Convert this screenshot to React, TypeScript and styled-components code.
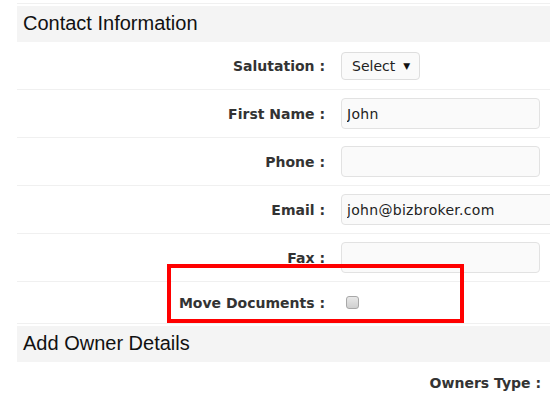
import React from "react";
import styled, { createGlobalStyle } from "styled-components";

const GlobalStyle = createGlobalStyle`
  html, body {
    margin: 0;
    padding: 0;
    background: #fff;
    overflow: hidden;
  }
`;

function App() {
  return (
    <>
      <GlobalStyle />
      <Page>
        <TopRule />
        <SectionTitle>Contact Information</SectionTitle>

        <FormRow>
          <Label>Salutation :</Label>
          <Field>
            <SelectBox>
              Select <Caret>▼</Caret>
            </SelectBox>
          </Field>
        </FormRow>

        <FormRow>
          <Label>First Name :</Label>
          <Field>
            <TextBox value="John" readOnly />
          </Field>
        </FormRow>

        <FormRow>
          <Label>Phone :</Label>
          <Field>
            <TextBox value="" readOnly />
          </Field>
        </FormRow>

        <FormRow>
          <Label>Email :</Label>
          <Field>
            <TextBox value="john@bizbroker.com" readOnly $wide />
          </Field>
        </FormRow>

        <FormRow>
          <Label>Fax :</Label>
          <Field>
            <TextBox value="" readOnly />
          </Field>
        </FormRow>

        <FormRow $short>
          <Label>Move Documents :</Label>
          <Field>
            <Check type="checkbox" />
          </Field>
          <Highlight />
        </FormRow>

        <SectionTitle>Add Owner Details</SectionTitle>

        <FormRow $short $noLine>
          <Label $wide>Owners Type :</Label>
        </FormRow>
      </Page>
    </>
  );
}

const Page = styled.div`
  width: 600px;
  padding: 0 0 0 17px;
  box-sizing: border-box;
`;

const TopRule = styled.div`
  height: 2px;
  border-top: 1px solid #f0f0f0;
  margin-top: 3px;
`;

const SectionTitle = styled.h2`
  margin: 0;
  height: 36px;
  line-height: 34px;
  padding-left: 6px;
  background: #f4f4f4;
  font-family: "Liberation Sans", Arial, sans-serif;
  font-weight: normal;
  font-size: 20px;
  color: #111;
`;

const FormRow = styled.div<{ $short?: boolean; $noLine?: boolean }>`
  position: relative;
  display: flex;
  align-items: center;
  height: ${(p) => (p.$short ? "41px" : "47px")};
  border-bottom: ${(p) => (p.$noLine ? "none" : "1px solid #f0f0f0")};
  margin-bottom: ${(p) => (p.$short && !p.$noLine ? "2px" : "0")};
`;

const Label = styled.label<{ $wide?: boolean }>`
  width: ${(p) => (p.$wide ? "524px" : "308px")};
  padding-right: 7px;
  text-align: right;
  font-family: "DejaVu Sans", Verdana, sans-serif;
  font-weight: bold;
  font-size: 14px;
  color: #333;
  flex-shrink: 0;
`;

const Field = styled.div`
  padding-left: 9px;
  display: flex;
  align-items: center;
`;

const SelectBox = styled.div`
  width: 79px;
  height: 28px;
  box-sizing: border-box;
  border: 1px solid #dedede;
  border-radius: 4px;
  background: #fafafa;
  font-family: "DejaVu Sans", Verdana, sans-serif;
  font-size: 14px;
  color: #222;
  display: flex;
  align-items: center;
  padding-left: 10px;
  gap: 8px;
`;

const Caret = styled.span`
  font-size: 9px;
  color: #111;
`;

const TextBox = styled.input<{ $wide?: boolean }>`
  width: ${(p) => (p.$wide ? "240px" : "199px")};
  height: 31px;
  box-sizing: border-box;
  border: 1px solid #e2e2e2;
  border-radius: 4px;
  background: #fafafa;
  padding: 0 5px;
  font-family: "DejaVu Sans", Verdana, sans-serif;
  font-size: 14px;
  letter-spacing: 0.3px;
  color: #222;
  outline: none;
`;

const Check = styled.input`
  appearance: none;
  width: 13px;
  height: 13px;
  margin: 0 0 0 5px;
  border: 1px solid #a8a8a8;
  border-radius: 3px;
  background: linear-gradient(#e8e8e8, #cfcfcf);
`;

const Highlight = styled.div`
  position: absolute;
  left: 150px;
  top: -18px;
  width: 297px;
  height: 59px;
  box-sizing: border-box;
  border: 4px solid #ff0000;
  pointer-events: none;
`;

export default App;
